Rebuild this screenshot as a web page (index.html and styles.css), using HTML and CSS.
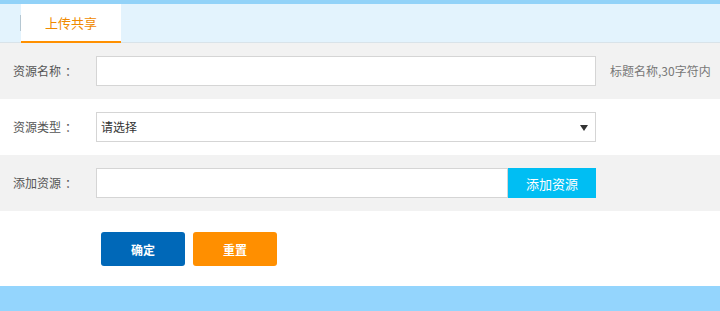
FILE: index.html
```html
<!DOCTYPE html>
<html lang="zh-CN">
<head>
<meta charset="utf-8">
<title>上传共享</title>
<link rel="stylesheet" href="styles.css">
</head>
<body>
<div class="topline"></div>
<div class="tabs">
  <span class="sep"></span>
  <span class="tab">上传共享</span>
</div>
<form class="form">
  <div class="row gray">
    <label class="label">资源名称<span class="colon">：</span></label>
    <input class="field" type="text">
    <span class="hint">标题名称,30字符内</span>
  </div>
  <div class="row">
    <label class="label">资源类型<span class="colon">：</span></label>
    <div class="select"><span class="select-text">请选择</span></div>
  </div>
  <div class="row gray">
    <label class="label">添加资源<span class="colon">：</span></label>
    <input class="field short" type="text">
    <button type="button" class="add">添加资源</button>
  </div>
  <div class="actions">
    <button type="button" class="btn ok">确定</button>
    <button type="button" class="btn reset">重置</button>
  </div>
</form>
<div class="footer"></div>
</body>
</html>
```
FILE: styles.css
```css
* { box-sizing: border-box; }
body {
  margin: 0;
  font-family: "Noto Sans CJK SC", "Noto Sans", sans-serif;
  font-size: 12px;
  line-height: 1.2;
  color: #333;
  background: #fff;
}
.topline {
  height: 4px;
  background: #92d2f8;
}
.tabs {
  height: 39px;
  background: #e3f3fd;
  border-bottom: 1px solid #d9e3e9;
  display: flex;
  align-items: flex-start;
  padding-left: 20px;
}
.sep {
  width: 1px;
  height: 16px;
  background: #b5c7d2;
  align-self: center;
  margin-top: -1px;
}
.tab {
  width: 100px;
  height: 39px;
  margin-bottom: -1px;
  background: #fff;
  border-bottom: 2px solid #ff9000;
  color: #f08a00;
  font-size: 13px;
  display: flex;
  align-items: center;
  justify-content: center;
  padding-top: 1px;
}
.form { margin: 0; }
.row {
  height: 56px;
  display: flex;
  align-items: center;
  padding-left: 13px;
}
.row.gray { background: #f2f2f2; }
.label {
  width: 83px;
  color: #555;
  font-size: 12px;
}
.colon {
  padding-left: 4px;
}
.field {
  width: 500px;
  height: 30px;
  border: 1px solid #d5d5d5;
  background: #fff;
  margin: 0;
  padding: 0 5px;
  font: inherit;
  outline: none;
}
.field.short { width: 412px; }
.hint {
  margin-left: 14px;
  color: #777;
  font-size: 12px;
}
.select {
  position: relative;
  width: 500px;
  height: 30px;
  border: 1px solid #d5d5d5;
  background: #fff;
  display: flex;
  align-items: center;
  padding-left: 4px;
  color: #333;
  font-size: 12px;
}
.select::after {
  content: "";
  position: absolute;
  right: 7px;
  top: 12px;
  border-left: 4px solid transparent;
  border-right: 4px solid transparent;
  border-top: 6px solid #333;
}
.add {
  width: 88px;
  height: 30px;
  border: 0;
  margin: 0;
  background: #00bef3;
  color: #fff;
  font-family: inherit;
  font-size: 13px;
  padding: 0;
  cursor: pointer;
}
.actions {
  height: 75px;
  display: flex;
  align-items: flex-start;
  gap: 8px;
  padding: 21px 0 0 101px;
}
.btn {
  width: 84px;
  height: 34px;
  border: 0;
  border-radius: 3px;
  color: #fff;
  font-family: inherit;
  font-size: 12px;
  font-weight: bold;
  padding: 0;
  cursor: pointer;
}
.btn.ok { background: #0068b8; }
.btn.reset { background: #ff8f00; }
.footer {
  height: 25px;
  background: #94d5fd;
}
```
